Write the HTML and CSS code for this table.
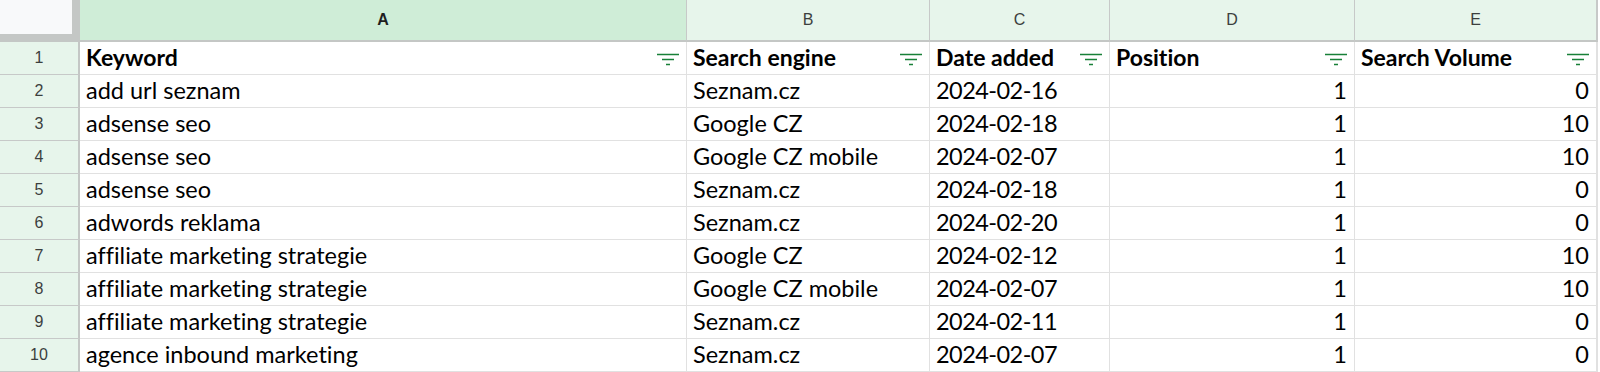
FILE: index.html
```html
<!DOCTYPE html>
<html>
<head>
<meta charset="utf-8">
<link rel="stylesheet" href="styles.css">
</head>
<body>
<div class="sheet">
  <div class="corner"><div class="corner-box"></div></div>
  <div class="colhead sel">A</div>
  <div class="colhead">B</div>
  <div class="colhead">C</div>
  <div class="colhead">D</div>
  <div class="colhead last">E</div>

  <div class="rowhead">1</div>
  <div class="cell hdr"><span>Keyword</span><svg class="filter" viewBox="0 0 22 13"><path d="M0 1.5H22M5 6.5H17M9 11.5H13"/></svg></div>
  <div class="cell hdr"><span>Search engine</span><svg class="filter" viewBox="0 0 22 13"><path d="M0 1.5H22M5 6.5H17M9 11.5H13"/></svg></div>
  <div class="cell hdr"><span>Date added</span><svg class="filter" viewBox="0 0 22 13"><path d="M0 1.5H22M5 6.5H17M9 11.5H13"/></svg></div>
  <div class="cell hdr"><span>Position</span><svg class="filter" viewBox="0 0 22 13"><path d="M0 1.5H22M5 6.5H17M9 11.5H13"/></svg></div>
  <div class="cell hdr last"><span>Search Volume</span><svg class="filter" viewBox="0 0 22 13"><path d="M0 1.5H22M5 6.5H17M9 11.5H13"/></svg></div>

  <div class="rowhead">2</div>
  <div class="cell">add url seznam</div><div class="cell">Seznam.cz</div><div class="cell date">2024-02-16</div><div class="cell num">1</div><div class="cell num last">0</div>
  <div class="rowhead">3</div>
  <div class="cell">adsense seo</div><div class="cell">Google CZ</div><div class="cell date">2024-02-18</div><div class="cell num">1</div><div class="cell num last">10</div>
  <div class="rowhead">4</div>
  <div class="cell">adsense seo</div><div class="cell">Google CZ mobile</div><div class="cell date">2024-02-07</div><div class="cell num">1</div><div class="cell num last">10</div>
  <div class="rowhead">5</div>
  <div class="cell">adsense seo</div><div class="cell">Seznam.cz</div><div class="cell date">2024-02-18</div><div class="cell num">1</div><div class="cell num last">0</div>
  <div class="rowhead">6</div>
  <div class="cell">adwords reklama</div><div class="cell">Seznam.cz</div><div class="cell date">2024-02-20</div><div class="cell num">1</div><div class="cell num last">0</div>
  <div class="rowhead">7</div>
  <div class="cell">affiliate marketing strategie</div><div class="cell">Google CZ</div><div class="cell date">2024-02-12</div><div class="cell num">1</div><div class="cell num last">10</div>
  <div class="rowhead">8</div>
  <div class="cell">affiliate marketing strategie</div><div class="cell">Google CZ mobile</div><div class="cell date">2024-02-07</div><div class="cell num">1</div><div class="cell num last">10</div>
  <div class="rowhead">9</div>
  <div class="cell">affiliate marketing strategie</div><div class="cell">Seznam.cz</div><div class="cell date">2024-02-11</div><div class="cell num">1</div><div class="cell num last">0</div>
  <div class="rowhead">10</div>
  <div class="cell">agence inbound marketing</div><div class="cell">Seznam.cz</div><div class="cell date">2024-02-07</div><div class="cell num">1</div><div class="cell num last">0</div>
</div>
</body>
</html>
```

FILE: styles.css
```css
html, body {
  margin: 0;
  padding: 0;
  background: #ffffff;
  overflow: hidden;
}

.sheet {
  display: grid;
  grid-template-columns: 80px 607px 243px 180px 245px 243px;
  grid-template-rows: 42px repeat(10, 33px);
  width: 1600px;
}

.corner {
  background: #c4c7c5;
  border-right: 1px solid #c4c7c5;
  padding: 0 7px 8px 0;
  box-sizing: border-box;
}

.corner-box {
  width: 100%;
  height: 100%;
  background: #f8f9fa;
}

.colhead {
  box-sizing: border-box;
  background: #e7f5eb;
  border-right: 1px solid #c7c9c8;
  border-bottom: 2px solid #c4c7c5;
  display: flex;
  align-items: center;
  justify-content: center;
  font-family: "Liberation Sans", Arial, sans-serif;
  font-size: 16px;
  color: #3c3f3e;
  padding-bottom: 1px;
}

.colhead.sel {
  background: #cfedd7;
  font-weight: bold;
  color: #1f1f1f;
}

.colhead.last {
  border-right: 2px solid #c7c9c8;
}

.rowhead {
  box-sizing: border-box;
  background: #e7f5eb;
  border-right: 2px solid #c4c7c5;
  border-bottom: 1px solid #c7c9c8;
  display: flex;
  align-items: center;
  justify-content: center;
  font-family: "Liberation Sans", Arial, sans-serif;
  font-size: 16px;
  color: #3c3f3e;
}

.cell {
  box-sizing: border-box;
  border-right: 1px solid #e1e1e1;
  border-bottom: 1px solid #e1e1e1;
  display: flex;
  align-items: flex-end;
  padding: 0 7px 4px 6px;
  font-family: Lato, "Noto Sans", sans-serif;
  font-size: 23.5px;
  line-height: 26px;
  font-variant-ligatures: none;
  color: #000000;
  white-space: nowrap;
  overflow: hidden;
}

.cell.date {
  letter-spacing: -0.55px;
}

.cell.last {
  border-right: 2px solid #e1e1e1;
}

.cell.num {
  justify-content: flex-end;
}

.cell.hdr {
  font-size: 23px;
  font-weight: bold;
  justify-content: space-between;
  padding-right: 7px;
}

.filter {
  width: 22px;
  height: 13px;
  margin-bottom: 4px;
  flex: none;
}

.filter path {
  stroke: #188038;
  stroke-width: 1.6;
  fill: none;
}
```
